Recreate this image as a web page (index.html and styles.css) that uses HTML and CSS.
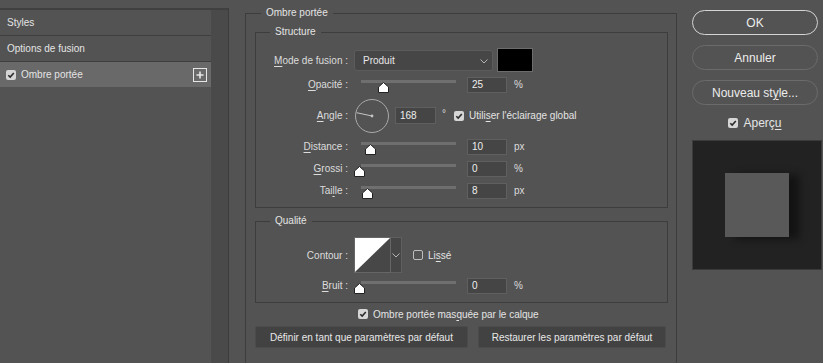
FILE: index.html
```html
<!DOCTYPE html>
<html lang="fr">
<head>
  <meta charset="UTF-8">
  <title>Style de calque</title>
  <link rel="stylesheet" href="styles.css">
</head>
<body>

<!-- Liste des effets -->
<div class="sidebar">
  <div class="list">
    <div class="items">
      <div class="item">Styles</div>
      <div class="item">Options de fusion</div>
      <div class="item selected">
        <span class="check"><svg width="10" height="10" viewBox="0 0 10 10"><path d="M2.3 5.2 L4.2 7.1 L7.8 3" fill="none" stroke="#2b2b2b" stroke-width="1.6"/></svg></span>
        <span class="item-label">Ombre portée</span>
        <span class="plus"><svg width="14" height="14" viewBox="0 0 14 14"><rect x="0.5" y="0.5" width="13" height="13" fill="none" stroke="#e6e6e6"/><path d="M7 3.5 V10.5 M3.5 7 H10.5" stroke="#e6e6e6" stroke-width="1.6"/></svg></span>
      </div>
    </div>
    <div class="scrollbar"></div>
  </div>
</div>

<!-- Réglages -->
<div class="main">
  <fieldset class="group outer">
    <legend>Ombre portée</legend>

    <fieldset class="group inner structure">
      <legend>Structure</legend>

      <div class="row row-mode">
        <label class="lbl"><u>M</u>ode de fusion :</label>
        <div class="select">Produit
          <svg class="chev" width="8" height="5" viewBox="0 0 8 5"><path d="M0.5 0.5 L4 4 L7.5 0.5" fill="none" stroke="#b5b5b5"/></svg>
        </div>
        <div class="swatch"></div>
      </div>

      <div class="row row-slider first">
        <label class="lbl"><u>O</u>pacité :</label>
        <div class="slider"><div class="track"></div><span class="thumb" style="left:17px"></span></div>
        <div class="num">25</div>
        <span class="unit">%</span>
      </div>

      <div class="row row-angle">
        <label class="lbl"><u>A</u>ngle :</label>
        <svg class="dial" width="36" height="36" viewBox="0 0 36 36">
          <circle cx="18" cy="18" r="16.5" fill="none" stroke="#a9a9a9"/>
          <line x1="18" y1="18" x2="2.6" y2="14.7" stroke="#c4c4c4"/>
          <circle cx="18" cy="18" r="1.4" fill="#c4c4c4"/>
        </svg>
        <div class="num angle">168</div>
        <span class="deg">°</span>
        <span class="check"><svg width="10" height="10" viewBox="0 0 10 10"><path d="M2.3 5.2 L4.2 7.1 L7.8 3" fill="none" stroke="#2b2b2b" stroke-width="1.6"/></svg></span>
        <span class="opt">Utili<u>s</u>er l'éclairage global</span>
      </div>

      <div class="row row-slider">
        <label class="lbl"><u>D</u>istance :</label>
        <div class="slider"><div class="track"></div><span class="thumb" style="left:4px"></span></div>
        <div class="num">10</div>
        <span class="unit">px</span>
      </div>

      <div class="row row-slider">
        <label class="lbl"><u>G</u>rossi :</label>
        <div class="slider"><div class="track"></div><span class="thumb" style="left:-7px"></span></div>
        <div class="num">0</div>
        <span class="unit">%</span>
      </div>

      <div class="row row-slider">
        <label class="lbl">Tai<u>l</u>le :</label>
        <div class="slider"><div class="track"></div><span class="thumb" style="left:1px"></span></div>
        <div class="num">8</div>
        <span class="unit">px</span>
      </div>
    </fieldset>

    <fieldset class="group inner quality">
      <legend>Qualité</legend>

      <div class="row row-contour">
        <label class="lbl">Contour :</label>
        <div class="contour">
          <svg width="35" height="34" viewBox="0 0 35 34"><rect width="35" height="34" fill="#474747"/><polygon points="0,0 35,0 0,34" fill="#ffffff"/></svg>
        </div>
        <div class="contour-arrow">
          <svg width="8" height="5" viewBox="0 0 8 5"><path d="M0.5 0.5 L4 4 L7.5 0.5" fill="none" stroke="#b5b5b5"/></svg>
        </div>
        <span class="box"></span>
        <span class="opt">Li<u>s</u>sé</span>
      </div>

      <div class="row row-slider first">
        <label class="lbl"><u>B</u>ruit :</label>
        <div class="slider"><div class="track"></div><span class="thumb" style="left:-7px"></span></div>
        <div class="num">0</div>
        <span class="unit">%</span>
      </div>
    </fieldset>

    <div class="row row-mask">
      <span class="check"><svg width="10" height="10" viewBox="0 0 10 10"><path d="M2.3 5.2 L4.2 7.1 L7.8 3" fill="none" stroke="#2b2b2b" stroke-width="1.6"/></svg></span>
      <span class="opt">Ombre portée mas<u>q</u>uée par le calque</span>
    </div>

    <div class="row row-buttons">
      <button class="btn-flat wide">Définir en tant que paramètres par défaut</button>
      <button class="btn-flat">Restaurer les paramètres par défaut</button>
    </div>
  </fieldset>
</div>

<!-- Actions -->
<div class="actions">
  <button class="pill primary">OK</button>
  <button class="pill">Annuler</button>
  <button class="pill">Nouveau st<u>y</u>le...</button>
  <div class="preview-toggle">
    <span class="check"><svg width="10" height="10" viewBox="0 0 10 10"><path d="M2.3 5.2 L4.2 7.1 L7.8 3" fill="none" stroke="#2b2b2b" stroke-width="1.6"/></svg></span>
    <span class="opt">Aperç<u>u</u></span>
  </div>
  <div class="preview">
    <div class="sample"></div>
  </div>
</div>

</body>
</html>
```

FILE: styles.css
```css
body {
  margin: 0;
  width: 823px;
  height: 363px;
  overflow: hidden;
  display: flex;
  background-color: #535353;
  color: #dcdcdc;
  font-family: "Liberation Sans", Arial, sans-serif;
  font-size: 10px;
}

u {
  text-decoration-thickness: 1px;
  text-underline-offset: 2px;
}

/* ---- liste a gauche ---- */
.sidebar {
  width: 229px;
  padding-top: 8px;
}

.list {
  display: flex;
  height: 355px;
  box-sizing: border-box;
  border-top: 2px solid #404040;
  border-right: 1px solid #3c3c3c;
}

.items {
  width: 211px;
}

.scrollbar {
  width: 17px;
  background-color: #4a4a4a;
}

.item {
  display: flex;
  align-items: center;
  height: 25px;
  padding-left: 7px;
  border-bottom: 1px solid #3e3e3e;
  color: #e4e4e4;
}

.item.selected {
  padding-left: 6px;
  background-color: #696969;
  border-bottom: none;
}

.item-label {
  flex: 1;
  margin-left: 5px;
}

.plus {
  display: flex;
  margin-right: 4px;
}

/* ---- groupes ---- */
.main {
  width: 451px;
  padding-left: 16px;
  box-sizing: border-box;
}

.group {
  margin: 0;
  border: 1px solid #3d3d3d;
  box-sizing: border-box;
  min-width: 0;
}

.group legend {
  padding: 0 5px;
  line-height: 14px;
  color: #e4e4e4;
}

.outer {
  width: 432px;
  margin-top: 6px;
  padding: 0 8px 0 9px;
  border-bottom: none;
  height: 357px;
}

.outer > legend {
  margin-left: 6px;
}

.inner {
  padding: 0 0 8px 0;
}

.inner > legend {
  margin-left: 14px;
}

.structure {
  margin-top: 5px;
}

.quality {
  margin-top: 6px;
}

/* ---- lignes ---- */
.row {
  display: flex;
  align-items: center;
}

.lbl {
  width: 92px;
  text-align: right;
  flex-shrink: 0;
}

.row-mode {
  height: 24px;
  margin-top: 9px;
}

.select {
  position: relative;
  width: 139px;
  height: 21px;
  margin-left: 6px;
  padding-left: 8px;
  box-sizing: border-box;
  display: flex;
  align-items: center;
  background-color: #464646;
  border: 1px solid #5c5c5c;
  border-radius: 3px;
  color: #e8e8e8;
}

.chev {
  position: absolute;
  right: 4px;
  top: 8px;
}

.swatch {
  width: 36px;
  height: 24px;
  margin-left: 4px;
  box-sizing: border-box;
  background-color: #000;
  border: 1px solid #6c6c6c;
}

.row-slider {
  height: 16px;
  margin-top: 6px;
  align-items: flex-start;
}

.row-slider.first {
  margin-top: 5px;
}

.row-slider .lbl {
  line-height: 16px;
}

.slider {
  position: relative;
  width: 95px;
  height: 16px;
  margin-left: 13px;
}

.track {
  margin-top: 3px;
  height: 3px;
  background-color: #6f6f6f;
}

.thumb {
  position: absolute;
  top: 5px;
  width: 11px;
  height: 11px;
  background: url("data:image/svg+xml,%3Csvg xmlns='http://www.w3.org/2000/svg' width='11' height='11' viewBox='0 0 11 11'%3E%3Cpath d='M5.5 0.5 L10.5 5 L10.5 10.5 L0.5 10.5 L0.5 5 Z' fill='%23ffffff' stroke='%23222222' stroke-linejoin='round'/%3E%3C/svg%3E") no-repeat;
}

.num {
  width: 40px;
  height: 16px;
  margin-left: 11px;
  padding-left: 4px;
  box-sizing: border-box;
  line-height: 14px;
  background-color: #454545;
  border: 1px solid #5f5f5f;
  color: #eeeeee;
}

.unit {
  margin-left: 7px;
  line-height: 16px;
}

.row-angle {
  height: 35px;
  margin-top: 5px;
}

.dial {
  margin-left: 6px;
}

.num.angle {
  width: 41px;
  height: 17px;
  margin-left: 5px;
  line-height: 15px;
}

.deg {
  margin-left: 6px;
  margin-top: -4px;
}

.row-angle .check {
  margin-left: 8px;
}

.opt {
  margin-left: 5px;
  color: #e4e4e4;
}

/* cases a cocher */
.check {
  display: inline-flex;
  width: 10px;
  height: 10px;
  background-color: #d6d6d6;
  border-radius: 2px;
}

.box {
  display: inline-block;
  width: 10px;
  height: 10px;
  box-sizing: border-box;
  border: 1px solid #bdbdbd;
  border-radius: 2px;
  margin-left: 11px;
}

/* qualite */
.row-contour {
  height: 36px;
  margin-top: 9px;
}

.contour {
  display: flex;
  margin-left: 6px;
  border: 1px solid #666;
}

.contour-arrow {
  width: 11px;
  height: 36px;
  box-sizing: border-box;
  display: flex;
  align-items: center;
  justify-content: center;
  background-color: #464646;
  border: 1px solid #5f5f5f;
  border-left: none;
}

.row-mask {
  height: 14px;
  margin-top: 4px;
  padding-left: 103px;
}

.row-buttons {
  margin-top: 5px;
  gap: 10px;
}

.btn-flat {
  width: 188px;
  height: 22px;
  padding: 0;
  background-color: #424242;
  border: 1px solid #4b4b4b;
  border-radius: 2px;
  color: #e8e8e8;
  font-family: inherit;
  font-size: 10px;
}

.btn-flat.wide {
  width: 213px;
}

/* ---- colonne droite ---- */
.actions {
  width: 143px;
  padding-left: 12px;
  padding-top: 10px;
  box-sizing: border-box;
  display: flex;
  flex-direction: column;
}

.pill {
  width: 126px;
  height: 25px;
  margin-bottom: 10px;
  padding: 0;
  background-color: #535353;
  border: 1px solid #6b6b6b;
  border-radius: 13px;
  color: #ececec;
  font-family: inherit;
  font-size: 12px;
}

.pill.primary {
  border-color: #d4d4d4;
}

.preview-toggle {
  display: flex;
  align-items: center;
  justify-content: center;
  width: 126px;
  height: 14px;
  margin-top: 1px;
  font-size: 12px;
}

.preview {
  width: 130px;
  height: 130px;
  margin-top: 10px;
  box-sizing: border-box;
  display: flex;
  align-items: center;
  justify-content: center;
  background-color: #222222;
  border: 1px solid #3b3b3b;
}

.sample {
  width: 64px;
  height: 64px;
  background-color: #595959;
  box-shadow: 10px 2px 8px rgba(0, 0, 0, 0.45);
}
```
